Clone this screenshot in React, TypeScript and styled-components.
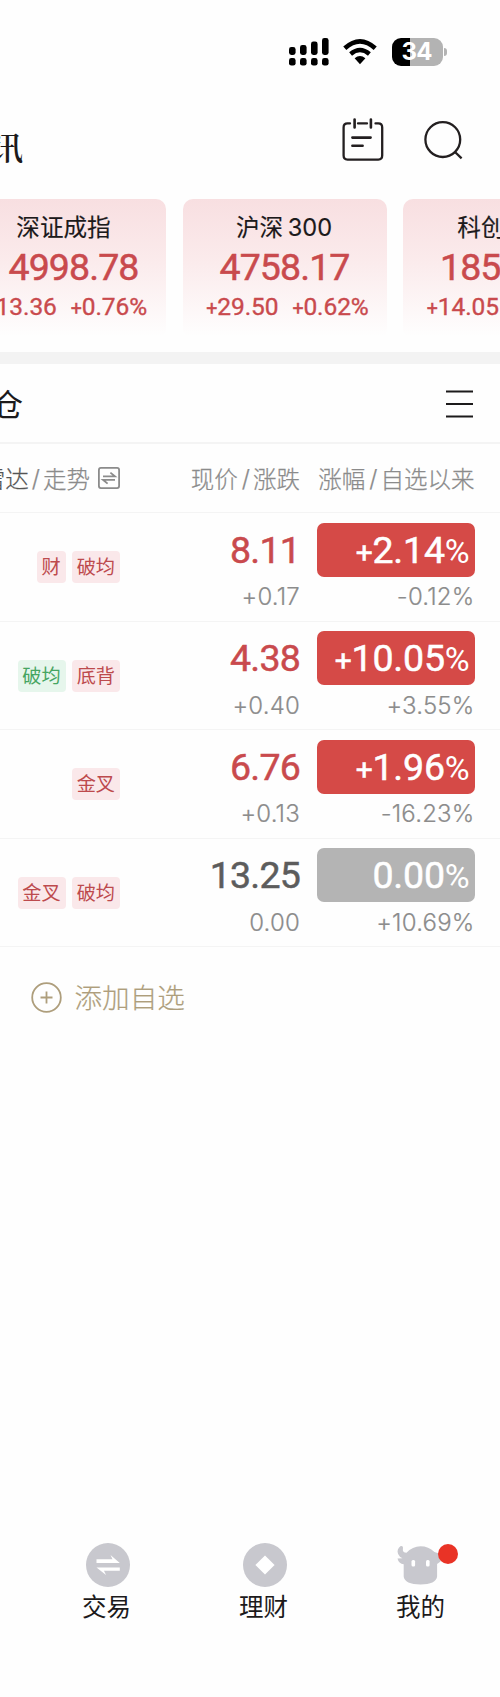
import React from 'react';
import styled, { createGlobalStyle } from 'styled-components';

const GlobalStyle = createGlobalStyle`
  * { box-sizing: border-box; }
  body {
    margin: 0;
    background: #fefefe;
    color: #1c1a1b;
    font-family: Inter, 'Noto Sans CJK SC', sans-serif;
    overflow: hidden;
  }
  svg { display: block; flex: none; }
`;

const RED = '#c94a4d';

const Screen = styled.div`
  width: 500px;
  height: 1697px;
  display: flex;
  flex-direction: column;
  overflow: hidden;
  white-space: nowrap;
`;

const StatusBar = styled.div`
  height: 104px;
  padding: 38px 53px 0 0;
  display: flex;
  justify-content: flex-end;
  align-items: flex-start;
`;

const SignalIcon = styled.svg`
  margin-right: 14px;
`;

const WifiIcon = styled.svg`
  margin-right: 15px;
`;

const Battery = styled.div`
  width: 51px;
  height: 28px;
  border-radius: 9px;
  background: linear-gradient(90deg, #000 18px, #b3b3b3 18px);
  color: #fff;
  font: 700 24px/28px Inter, sans-serif;
  letter-spacing: -0.8px;
  text-align: center;
  padding-right: 2px;
`;

const BatteryCap = styled.div`
  width: 3px;
  height: 8px;
  margin: 10px 0 0 1px;
  border-radius: 0 3px 3px 0;
  background: #b3b3b3;
`;

const TitleBar = styled.div`
  height: 95px;
  padding: 14px 37px 0 0;
  display: flex;
  align-items: flex-start;
`;

const PageTitle = styled.div`
  width: 64px;
  margin: 8px auto 0 -41px;
  font: 600 32px/40px 'Noto Serif CJK SC', 'Noto Sans CJK SC', serif;
`;

const SearchIcon = styled.svg`
  margin-left: 40px;
`;

const CardStrip = styled.div`
  height: 153px;
  margin-left: -38px;
  display: flex;
  gap: 16.5px;
`;

const Card = styled.div`
  flex: none;
  width: 204px;
  height: 140px;
  border-radius: 10px;
  background: linear-gradient(#f8dfe1, #fbebec 45%, #fefefe 98%);
  display: flex;
  flex-direction: column;
  align-items: center;
`;

const CardName = styled.div`
  margin: 13px 1px 0 0;
  height: 32px;
  font-size: 23.6px;
  line-height: 32px;
  -webkit-text-stroke: 0.15px;
  word-spacing: -2px;
`;

const CardValue = styled.div<{ $inset?: number }>`
  height: 46px;
  padding-left: ${(p) => p.$inset ?? 0}px;
  font: 400 37.5px/46px Roboto, sans-serif;
  -webkit-text-stroke: 0.5px;
  letter-spacing: -0.9px;
  color: ${RED};
`;

const CardChange = styled.div<{ $pull?: number }>`
  height: 36px;
  margin: -1px 0 0;
  padding: 0 ${(p) => p.$pull ?? 0}px 0 6px;
  display: flex;
  gap: 14px;
  font: 400 24.5px/36px Roboto, sans-serif;
  -webkit-text-stroke: 0.35px;
  letter-spacing: -0.1px;
  color: ${RED};
`;

const Plus = styled.span`
  font-size: 0.8em;
`;

const Band = styled.div`
  height: 12px;
  background: #f3f3f3;
`;

const SectionBar = styled.div`
  height: 80px;
  padding: 2px 27px 0 0;
  display: flex;
  align-items: center;
  justify-content: space-between;
  border-bottom: 2px solid #f4f4f4;
`;

const SectionTitle = styled.div`
  margin: 2px 0 0 -39px;
  font-size: 31px;
  line-height: 44px;
`;

const Columns = styled.div<{ $height: number }>`
  height: ${(p) => p.$height}px;
  display: grid;
  grid-template-columns: 120px 180px 174.5px;
  border-bottom: 1px solid #f4f4f4;
`;

const HeadCell = styled.div`
  display: flex;
  align-items: center;
  justify-content: flex-end;
  font-size: 23.5px;
  font-weight: 300;
  -webkit-text-stroke: 0.25px;
  color: #8b8b8b;
`;

const Slash = styled.span<{ $tight?: boolean }>`
  margin: ${(p) => (p.$tight ? '0 3px' : '0 3px 0 4px')};
`;

const Active = styled.span`
  color: #555;
`;

const SwapIcon = styled.svg`
  margin-left: 8px;
`;

const Tags = styled.div`
  height: 32px;
  margin-top: 38px;
  display: flex;
  justify-content: flex-end;
  gap: 6.5px;
`;

const Tag = styled.span<{ $green?: boolean }>`
  padding: 0 5px 0 4.5px;
  height: 32px;
  border-radius: 4px;
  font-size: 19.2px;
  line-height: 32px;
  color: ${(p) => (p.$green ? '#46a562' : '#bd4a4d')};
  background: ${(p) => (p.$green ? '#e6f6ec' : '#fae8ea')};
`;

const Cell = styled.div`
  padding-top: 9.5px;
  display: flex;
  flex-direction: column;
  align-items: flex-end;
`;

const Price = styled.div<{ $flat?: boolean }>`
  height: 54px;
  font: 400 37.5px/54px Roboto, sans-serif;
  -webkit-text-stroke: 0.5px;
  letter-spacing: -0.8px;
  color: ${(p) => (p.$flat ? '#5c5c5c' : RED)};
`;

const Pill = styled.div<{ $flat?: boolean }>`
  width: 158px;
  height: 54px;
  padding-right: 5px;
  border-radius: 7px;
  text-align: right;
  font: 400 37.5px/54px Roboto, sans-serif;
  -webkit-text-stroke: 0.5px;
  letter-spacing: -0.2px;
  color: #fff;
  background: ${(p) => (p.$flat ? '#b4b4b4' : '#d54a47')};
`;

const Pct = styled.span`
  font-size: 34px;
  -webkit-text-stroke: 0;
`;

const Minor = styled.div`
  height: 38px;
  margin-top: 1.5px;
  font: 300 24px/38px Inter, sans-serif;
  -webkit-text-stroke: 0.2px;
  letter-spacing: 0.2px;
  color: #8c8c8c;
`;

const AddRow = styled.div`
  flex: 1;
  padding: 30px 0 0 30.5px;
  display: flex;
  align-items: flex-start;
  gap: 13px;
  font-size: 27.6px;
  line-height: 42px;
  font-weight: 300;
  -webkit-text-stroke: 0.2px;
  color: #ae9e7c;
`;

const AddIcon = styled.svg`
  margin-top: 5px;
`;

const TabBar = styled.nav`
  height: 155px;
  padding-left: 29px;
  display: flex;
`;

const Tab = styled.div`
  width: 157px;
  display: flex;
  flex-direction: column;
  align-items: center;
`;

const TabLabel = styled.div`
  margin: 1px 2px 0 0;
  font-size: 24.5px;
  line-height: 36px;
`;

const TabGlyph = styled.div`
  position: relative;
  height: 46px;
`;

const Dot = styled.i`
  position: absolute;
  left: 38px;
  top: 2px;
  width: 20px;
  height: 20px;
  border-radius: 50%;
  background: #e93326;
`;

const cards = [
  { name: '深证成指', value: '4998.78', inset: 19, diff: '113.36', pct: '0.76%', pull: 16 },
  { name: '沪深 300', value: '4758.17', diff: '29.50', pct: '0.62%' },
  { name: '科创综指', value: '1850.26', diff: '14.05', pct: '0.77%' },
];

type Stock = { tags: [string, boolean?][]; price: string; diff: string; pct: string; since: string; flat?: boolean };

const stocks: Stock[] = [
  { tags: [['财'], ['破均']], price: '8.11', diff: '+0.17', pct: '2.14', since: '-0.12%' },
  { tags: [['破均', true], ['底背']], price: '4.38', diff: '+0.40', pct: '10.05', since: '+3.55%' },
  { tags: [['金叉']], price: '6.76', diff: '+0.13', pct: '1.96', since: '-16.23%' },
  { tags: [['金叉'], ['破均']], price: '13.25', diff: '0.00', pct: '0.00', since: '+10.69%', flat: true },
];

export default function App() {
  return (
    <Screen>
      <GlobalStyle />
      <StatusBar>
        <SignalIcon width="40" height="28" viewBox="0 0 40 28">
          {[[0, 9], [11, 7], [22, 3.5], [33, 0]].map(([x, y]) => (
            <React.Fragment key={x}>
              <rect x={x} y={y} width="6.6" height={17 - y} rx="2.4" />
              <rect x={x} y="20" width="6.6" height="7.6" rx="2.4" />
            </React.Fragment>
          ))}
        </SignalIcon>
        <WifiIcon width="34" height="28" viewBox="0 0 34 28">
          <path d="M1.8 10.2Q17-3.6 32.2 10.2" fill="none" stroke="#000" strokeWidth="4.6" />
          <path d="M7.6 16Q17 8 26.4 16" fill="none" stroke="#000" strokeWidth="4.4" />
          <path d="M11.6 20.2Q17 16 22.4 20.2L17 26.2z" />
        </WifiIcon>
        <Battery>34</Battery>
        <BatteryCap />
      </StatusBar>

      <TitleBar>
        <PageTitle>资讯</PageTitle>
        <svg width="42" height="44" viewBox="0 0 42 44" fill="none" stroke="#231f20" strokeWidth="2.3" strokeLinecap="round">
          <path d="M8 5.4H5.5Q1.6 5.4 1.6 9.4V37.6Q1.6 41.6 5.5 41.6H36.3Q40.2 41.6 40.2 37.6V9.4Q40.2 5.4 36.3 5.4H33.5M16 5.4H25" />
          <path d="M12.6 1.5V9.5M28.9 1.5V9.5" strokeWidth="2.6" />
          <path d="M10.4 19.6H28.6M10.4 27.8H20.6" strokeWidth="2.6" />
        </svg>
        <SearchIcon width="39" height="44" viewBox="0 0 39 44" fill="none" stroke="#231f20" strokeWidth="2.3">
          <circle cx="18.8" cy="21.6" r="17.4" />
          <path d="M31 34L37.6 40.4" />
        </SearchIcon>
      </TitleBar>

      <CardStrip>
        {cards.map((c) => (
          <Card key={c.name}>
            <CardName>{c.name}</CardName>
            <CardValue $inset={c.inset}>{c.value}</CardValue>
            <CardChange $pull={c.pull}>
              <span><Plus>+</Plus>{c.diff}</span>
              <span><Plus>+</Plus>{c.pct}</span>
            </CardChange>
          </Card>
        ))}
      </CardStrip>
      <Band />

      <SectionBar>
        <SectionTitle>持仓</SectionTitle>
        <svg width="27" height="28" viewBox="0 0 27 28" stroke="#1c1a1b" strokeWidth="2">
          <path d="M0 1.5H27M0 14H27M0 26.5H27" />
        </svg>
      </SectionBar>

      <Columns $height={69}>
        <HeadCell>
          <Active>雷达</Active><Slash $tight>/</Slash>走势
          <SwapIcon width="22" height="22" viewBox="0 0 22 22" fill="none" stroke="#8b8b8b" strokeWidth="1.8">
            <rect x="0.9" y="0.9" width="20.2" height="20.2" rx="2" />
            <path d="M5 9.4H17L12.4 5.6M17 12.8H5L9.6 16.6" />
          </SwapIcon>
        </HeadCell>
        <HeadCell>现价<Slash>/</Slash>涨跌</HeadCell>
        <HeadCell>涨幅<Slash>/</Slash>自选以来</HeadCell>
      </Columns>

      {stocks.map((s) => (
        <Columns key={s.price} $height={108.5}>
          <Tags>
            {s.tags.map(([label, green]) => <Tag key={label} $green={green}>{label}</Tag>)}
          </Tags>
          <Cell>
            <Price $flat={s.flat}>{s.price}</Price>
            <Minor>{s.diff}</Minor>
          </Cell>
          <Cell>
            <Pill $flat={s.flat}>{!s.flat && <Plus>+</Plus>}{s.pct}<Pct>%</Pct></Pill>
            <Minor>{s.since}</Minor>
          </Cell>
        </Columns>
      ))}

      <AddRow>
        <AddIcon width="31" height="31" viewBox="0 0 31 31" fill="none" stroke="#ae9e7c" strokeWidth="1.8">
          <circle cx="15.5" cy="15.5" r="14.3" />
          <path d="M9.5 15.5H21.5M15.5 9.5V21.5" />
        </AddIcon>
        添加自选
      </AddRow>

      <TabBar>
        <Tab>
          <TabGlyph>
            <svg width="44" height="46" viewBox="0 0 44 46">
              <circle cx="22" cy="23" r="22" fill="#c8c8ce" />
              <path d="M10.5 17.2H26.5L24.5 13L33.8 20.9H10.5zM33.8 25.4H10.5L20 33L18 28.8H33.8z" fill="#fff" />
            </svg>
          </TabGlyph>
          <TabLabel>交易</TabLabel>
        </Tab>
        <Tab>
          <TabGlyph>
            <svg width="44" height="46" viewBox="0 0 44 46">
              <circle cx="22" cy="23" r="22" fill="#c8c8ce" />
              <path d="M22 13.4L31.6 23L22 32.6L12.4 23z" fill="#fff" />
            </svg>
          </TabGlyph>
          <TabLabel>理财</TabLabel>
        </Tab>
        <Tab>
          <TabGlyph>
            <svg width="44" height="46" viewBox="0 0 44 46" overflow="visible">
              <g transform="translate(-2.5 0)">
                <path d="M3.2 4C.2 6-.6 9 .6 12Q2 15.2 5 16.2L0 16.5Q1.2 21.8 6.2 22.2V34.5C6.5 39.5 13 42.5 23 42.5S39.2 39.5 39.6 34.5V22L43 19.5V12L37 10Q31 4.3 23 4.3T9 10.8Q4.8 10.5 5.4 7T3.2 4z" fill="#c8c8ce" />
                <rect x="14" y="18" width="3.6" height="6.5" rx="1.5" fill="#fff" />
                <rect x="28.5" y="18" width="3.6" height="6.5" rx="1.5" fill="#fff" />
              </g>
            </svg>
            <Dot />
          </TabGlyph>
          <TabLabel>我的</TabLabel>
        </Tab>
      </TabBar>
    </Screen>
  );
}
